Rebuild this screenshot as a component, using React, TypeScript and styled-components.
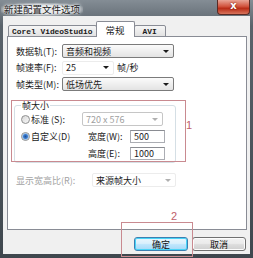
import React from 'react';
import styled, { createGlobalStyle } from 'styled-components';

const GlobalStyle = createGlobalStyle`
  html, body {
    margin: 0;
    padding: 0;
    width: 253px;
    height: 258px;
    overflow: hidden;
    background: #3d454c;
  }

  body {
    font-family: "Noto Sans CJK SC", "Liberation Sans", sans-serif;
    font-size: 9px;
    color: #1b1b1b;
  }

  * {
    box-sizing: border-box;
  }
`

const Window = styled.div`
  position: relative;
  width: 253px;
  height: 258px;
  display: flex;
  flex-direction: column;
  background: linear-gradient(180deg, #848d95 0%, #5a636b 10%, #3f474e 100%);
`

const TitleBar = styled.div`
  height: 18px;
  display: flex;
  align-items: flex-start;
  padding-left: 1px;
`

const Title = styled.div`
  margin-top: 3px;
  padding: 0 3px;
  height: 13px;
  line-height: 13px;
  font-size: 9.5px;
  color: #1a1a1a;
  background: radial-gradient(ellipse at center, rgba(228, 231, 234, 0.95) 45%, rgba(228, 231, 234, 0) 80%);
  text-shadow: 0 0 3px #fff, 0 0 5px #fff;
`

const CloseButton = styled.div`
  margin-left: auto;
  margin-right: 3px;
  width: 33px;
  height: 15px;
  border: 1px solid #5a2a24;
  border-top: none;
  border-radius: 0 0 4px 4px;
  background: linear-gradient(180deg, #e9a596 0%, #d2553f 45%, #b92d17 60%, #d8745c 100%);
  color: #fff;
  font-family: "DejaVu Sans", sans-serif;
  font-weight: bold;
  font-size: 10px;
  line-height: 12px;
  text-align: center;
  text-shadow: 0 0 2px #600;
`

const Client = styled.div`
  flex: 1;
  margin: 0 3px 4px 3px;
  background: #f0f0f0;
  display: flex;
  flex-direction: column;
  padding: 5px 3px 3px 4px;
`

const TabRow = styled.div`
  display: flex;
  align-items: flex-end;
  padding-left: 1px;
  margin-bottom: -1px;
  position: relative;
  z-index: 1;
`

const Tab = styled.div<{ $active?: boolean; $latin?: boolean; $pad: number }>`
  height: ${({ $active }) => ($active ? '16px' : '12px')};
  padding: 0 ${({ $pad }) => $pad}px;
  margin: ${({ $active }) => ($active ? '0 -1px' : '0')};
  border: 1px solid #898c95;
  border-bottom: ${({ $active }) => ($active ? 'none' : '1px solid #898c95')};
  border-radius: 2px 2px 0 0;
  background: ${({ $active }) => ($active ? '#fff' : 'linear-gradient(180deg, #f6f6f6, #e2e2e2)')};
  display: flex;
  align-items: center;
  font-family: ${({ $latin }) => ($latin ? '"Liberation Mono", monospace' : '"Noto Sans CJK SC", sans-serif')};
  font-weight: ${({ $latin }) => ($latin ? 'bold' : 'normal')};
  font-size: ${({ $latin }) => ($latin ? '7.9px' : '9.5px')};
  position: relative;
  z-index: ${({ $active }) => ($active ? 2 : 1)};
`

const Panel = styled.div`
  height: 194px;
  background: #fff;
  border: 1px solid #898c95;
  padding: 7px 0 0 8px;
  display: flex;
  flex-direction: column;
  gap: 2.5px;
`

const Row = styled.div`
  display: flex;
  align-items: center;
  height: 14px;
`

const Label = styled.span<{ $width: number; $muted?: boolean }>`
  width: ${({ $width }) => $width}px;
  flex: none;
  white-space: nowrap;
  color: ${({ $muted }) => ($muted ? '#a3a3a3' : '#1b1b1b')};
`

const Select = styled.div<{ $width: number; $disabled?: boolean; $plain?: boolean }>`
  width: ${({ $width }) => $width}px;
  height: 14px;
  flex: none;
  display: flex;
  align-items: center;
  justify-content: space-between;
  padding: 0 4px 0 3px;
  border: 1px solid ${({ $disabled, $plain }) => ($plain ? '#ececec' : $disabled ? '#c6c6c6' : '#7b7b7b')};
  border-radius: 2px;
  background: ${({ $disabled, $plain }) =>
    $disabled || $plain ? '#fff' : 'linear-gradient(180deg, #fbfbfb 0%, #efefef 50%, #e3e3e3 100%)'};
  color: ${({ $disabled }) => ($disabled ? '#a0a0a0' : '#1b1b1b')};
  white-space: nowrap;
`

const Arrow = styled.span<{ $disabled?: boolean }>`
  width: 0;
  height: 0;
  border-left: 3px solid transparent;
  border-right: 3px solid transparent;
  border-top: 3px solid ${({ $disabled }) => ($disabled ? '#b0b0b0' : '#1b1b1b')};
`

const Unit = styled.span`
  margin-left: 3px;
`

const Group = styled.fieldset`
  margin: 7px 0 0 -2px;
  width: 162px;
  padding: 0 0 2px 6px;
  border: 1px solid #d5dfe5;
  border-radius: 3px;
  display: flex;
  flex-direction: column;
  gap: 4px;
`

const Legend = styled.legend`
  padding: 0 1px;
  line-height: 10px;
  font-size: 9px;
  margin-bottom: 2px;
`

const GroupRow = styled.div<{ $indent?: number }>`
  display: flex;
  align-items: center;
  height: 13px;
  padding-left: ${({ $indent }) => $indent ?? 0}px;
`

const RadioOption = styled.label`
  width: 61px;
  flex: none;
  display: flex;
  align-items: center;
  white-space: nowrap;
`

const Radio = styled.span<{ $checked?: boolean }>`
  width: 9px;
  height: 9px;
  flex: none;
  margin-right: 1px;
  border-radius: 50%;
  border: 1px solid #8e8f8f;
  background: ${({ $checked }) =>
    $checked
      ? 'radial-gradient(circle, #1c4f98 0, #3f7fd0 2px, #9cc4ee 3px, #eef3f8 3.5px)'
      : 'linear-gradient(135deg, #d8d8d8, #f8f8f8)'};
`

const SizeLabel = styled.span`
  width: 42px;
  flex: none;
  white-space: nowrap;
`

const SizeGap = styled.span`
  width: 6px;
  flex: none;
`

const Input = styled.div`
  width: 35px;
  height: 13px;
  flex: none;
  border: 1px solid #abadb3;
  border-top-color: #8a8c92;
  padding-left: 3px;
  line-height: 11px;
  background: #fff;
`

const AspectRow = styled(Row)`
  margin-top: 8px;
`

const Footer = styled.div`
  display: flex;
  justify-content: flex-end;
  gap: 4px;
  margin-top: 7px;
  padding-right: 1px;
`

const Button = styled.div<{ $primary?: boolean }>`
  width: 54px;
  height: 14px;
  border: 1px solid ${({ $primary }) => ($primary ? '#3c7fb1' : '#707070')};
  border-radius: 3px;
  background: ${({ $primary }) =>
    $primary
      ? 'linear-gradient(180deg, #eaf6fd 0%, #d9f0fc 45%, #bee6fd 55%, #a7d9f5 100%)'
      : 'linear-gradient(180deg, #f2f2f2 0%, #ebebeb 45%, #dddddd 55%, #cfcfcf 100%)'};
  box-shadow: ${({ $primary }) => ($primary ? 'inset 0 0 0 1px #48d4f7' : 'inset 0 0 0 1px #fcfcfc')};
  display: flex;
  align-items: center;
  justify-content: center;
  font-size: 9px;
  color: #111;
`

const Mark = styled.div<{ $x: number; $y: number; $w: number; $h: number }>`
  position: absolute;
  left: ${({ $x }) => $x}px;
  top: ${({ $y }) => $y}px;
  width: ${({ $w }) => $w}px;
  height: ${({ $h }) => $h}px;
  border: 1px solid #c98a90;
  pointer-events: none;
`

const MarkNumber = styled.span<{ $x: number; $y: number }>`
  position: absolute;
  left: ${({ $x }) => $x}px;
  top: ${({ $y }) => $y}px;
  font-family: "Liberation Sans", sans-serif;
  font-size: 11px;
  line-height: 11px;
  color: #c0606a;
`

export default function App() {
  return (
    <>
      <GlobalStyle />
      <Window>
        <TitleBar>
          <Title>新建配置文件选项</Title>
          <CloseButton>x</CloseButton>
        </TitleBar>

        <Client>
          <TabRow>
            <Tab $latin $pad={3}>Corel VideoStudio</Tab>
            <Tab $active $pad={9}>常规</Tab>
            <Tab $latin $pad={8}>AVI</Tab>
          </TabRow>

          <Panel>
            <Row>
              <Label $width={46}>数据轨(T):</Label>
              <Select $width={112}>
                音频和视频
                <Arrow />
              </Select>
            </Row>
            <Row>
              <Label $width={46}>帧速率(F):</Label>
              <Select $width={52} $plain>
                25
                <Arrow />
              </Select>
              <Unit>帧/秒</Unit>
            </Row>
            <Row>
              <Label $width={46}>帧类型(M):</Label>
              <Select $width={112}>
                低场优先
                <Arrow />
              </Select>
            </Row>

            <Group>
              <Legend>帧大小</Legend>
              <GroupRow>
                <RadioOption>
                  <Radio />
                  标准 (S):
                </RadioOption>
                <Select $width={81} $disabled>
                  720 x 576
                  <Arrow $disabled />
                </Select>
              </GroupRow>
              <GroupRow>
                <RadioOption>
                  <Radio $checked />
                  自定义(D)
                </RadioOption>
                <SizeGap />
                <SizeLabel>宽度(W):</SizeLabel>
                <Input>500</Input>
              </GroupRow>
              <GroupRow $indent={67}>
                <SizeLabel>高度(E):</SizeLabel>
                <Input>1000</Input>
              </GroupRow>
            </Group>

            <AspectRow>
              <Label $width={76} $muted>显示宽高比(R):</Label>
              <Select $width={84} $plain>
                来源帧大小
                <Arrow $disabled />
              </Select>
            </AspectRow>
          </Panel>

          <Footer>
            <Button $primary>确定</Button>
            <Button>取消</Button>
          </Footer>
        </Client>

        <Mark $x={11} $y={100} $w={175} $h={62} />
        <MarkNumber $x={186} $y={120}>1</MarkNumber>
        <Mark $x={121} $y={222} $w={72} $h={35} />
        <MarkNumber $x={171} $y={211}>2</MarkNumber>
      </Window>
    </>
  )
}
